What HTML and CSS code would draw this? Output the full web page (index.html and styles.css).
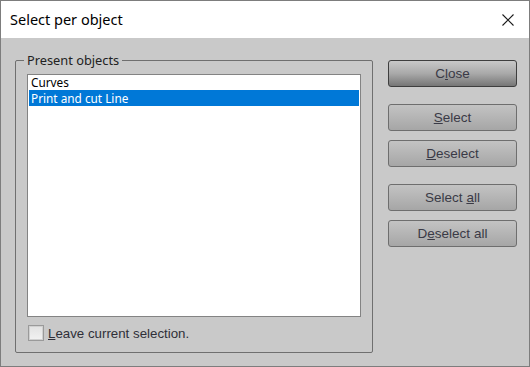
FILE: index.html
```html
<!DOCTYPE html>
<html>
<head>
<meta charset="utf-8">
<link rel="stylesheet" href="styles.css">
</head>
<body>
<div class="window">
  <div class="titlebar">
    <span class="title">Select per object</span>
    <svg class="close-x" width="12" height="12" viewBox="0 0 12 12"><path d="M0.5 0.5 L11.5 11.5 M11.5 0.5 L0.5 11.5" stroke="#1a1a1a" stroke-width="1.1" fill="none"/></svg>
  </div>
  <div class="content">
    <fieldset class="group">
      <legend class="legend">Present objects</legend>
      <div class="list">
        <div class="item">Curves</div>
        <div class="item selected">Print and cut Line</div>
      </div>
      <label class="check">
        <span class="box"></span>
        <span class="check-label"><u>L</u>eave current selection.</span>
      </label>
    </fieldset>
    <div class="buttons">
      <div class="btn default"><span>C<u>l</u>ose</span></div>
      <div class="btn gap-big"><span><u>S</u>elect</span></div>
      <div class="btn gap-small"><span><u>D</u>eselect</span></div>
      <div class="btn gap-big"><span>Select <u>a</u>ll</span></div>
      <div class="btn gap-small"><span>D<u>e</u>select all</span></div>
    </div>
  </div>
</div>
</body>
</html>
```
FILE: styles.css
```css
html, body { margin: 0; padding: 0; }
body { width: 530px; height: 367px; overflow: hidden; background: #c8c8c8; }
.window {
  box-sizing: border-box;
  width: 530px;
  height: 367px;
  border: 1px solid #7d7d7d;
  background: #c9c9c9;
  display: flex;
  flex-direction: column;
}
.titlebar {
  height: 37px;
  background: #ffffff;
  display: flex;
  align-items: center;
  justify-content: space-between;
  padding: 0 15px 0 9px;
  flex-shrink: 0;
}
.title {
  font-family: "Noto Sans", "Open Sans", sans-serif;
  font-size: 14.5px;
  color: #000;
  margin-top: -1px;
}
.close-x { display: block; }
.content {
  flex: 1;
  display: flex;
  padding: 14px 13px 0 14px;
  font-family: "Noto Sans", sans-serif;
}
.group {
  margin: 0;
  width: 358px;
  height: 301px;
  box-sizing: border-box;
  border: 1px solid #6f6f6f;
  border-radius: 2px;
  padding: 6px 11px 0 11px;
  display: flex;
  flex-direction: column;
}
.legend {
  font-family: "Noto Sans", sans-serif;
  font-size: 12.8px;
  line-height: 16px;
  color: #222;
  padding: 0 3px;
  margin-left: -3px;
}
.list {
  box-sizing: border-box;
  width: 334px;
  height: 243px;
  background: #fff;
  border: 1px solid #838383;
  padding: 0 1px;
}
.item {
  font-size: 11.8px;
  line-height: 16px;
  height: 16px;
  padding-left: 2px;
  color: #000;
}
.item:first-child { margin-top: -1px; }
.item.selected { background: #0078d7; color: #fff; }
.check {
  display: flex;
  align-items: center;
  margin-top: 8px;
  margin-left: 1px;
}
.box {
  box-sizing: border-box;
  width: 16px;
  height: 16px;
  border: 1px solid #9a9a9a;
  background: linear-gradient(#e2e2e2, #f2f2f2);
  box-shadow: inset 0 0 0 1px #d0d0d0;
}
.check-label {
  font-family: "Liberation Sans", Arial, sans-serif;
  font-size: 13.3px;
  color: #2f2f38;
  margin-left: 4px;
}
.buttons {
  margin-left: 15px;
  display: flex;
  flex-direction: column;
  padding-top: 8px;
}
.btn {
  box-sizing: border-box;
  width: 129px;
  height: 27px;
  border: 1px solid #6e6e6e;
  border-radius: 3px;
  background: linear-gradient(#c3c3c3, #a6a6a6);
  font-family: "Liberation Sans", Arial, sans-serif;
  font-size: 13.5px;
  color: #3a3a46;
  display: flex;
  align-items: center;
  justify-content: center;
  white-space: pre;
}
.btn.default {
  border-color: #3e3e3e;
  background: linear-gradient(#c8c8c8 0%, #a9a9a9 50%, #767676 100%);
}
.gap-big { margin-top: 17px; }
.gap-small { margin-top: 9px; }
```
